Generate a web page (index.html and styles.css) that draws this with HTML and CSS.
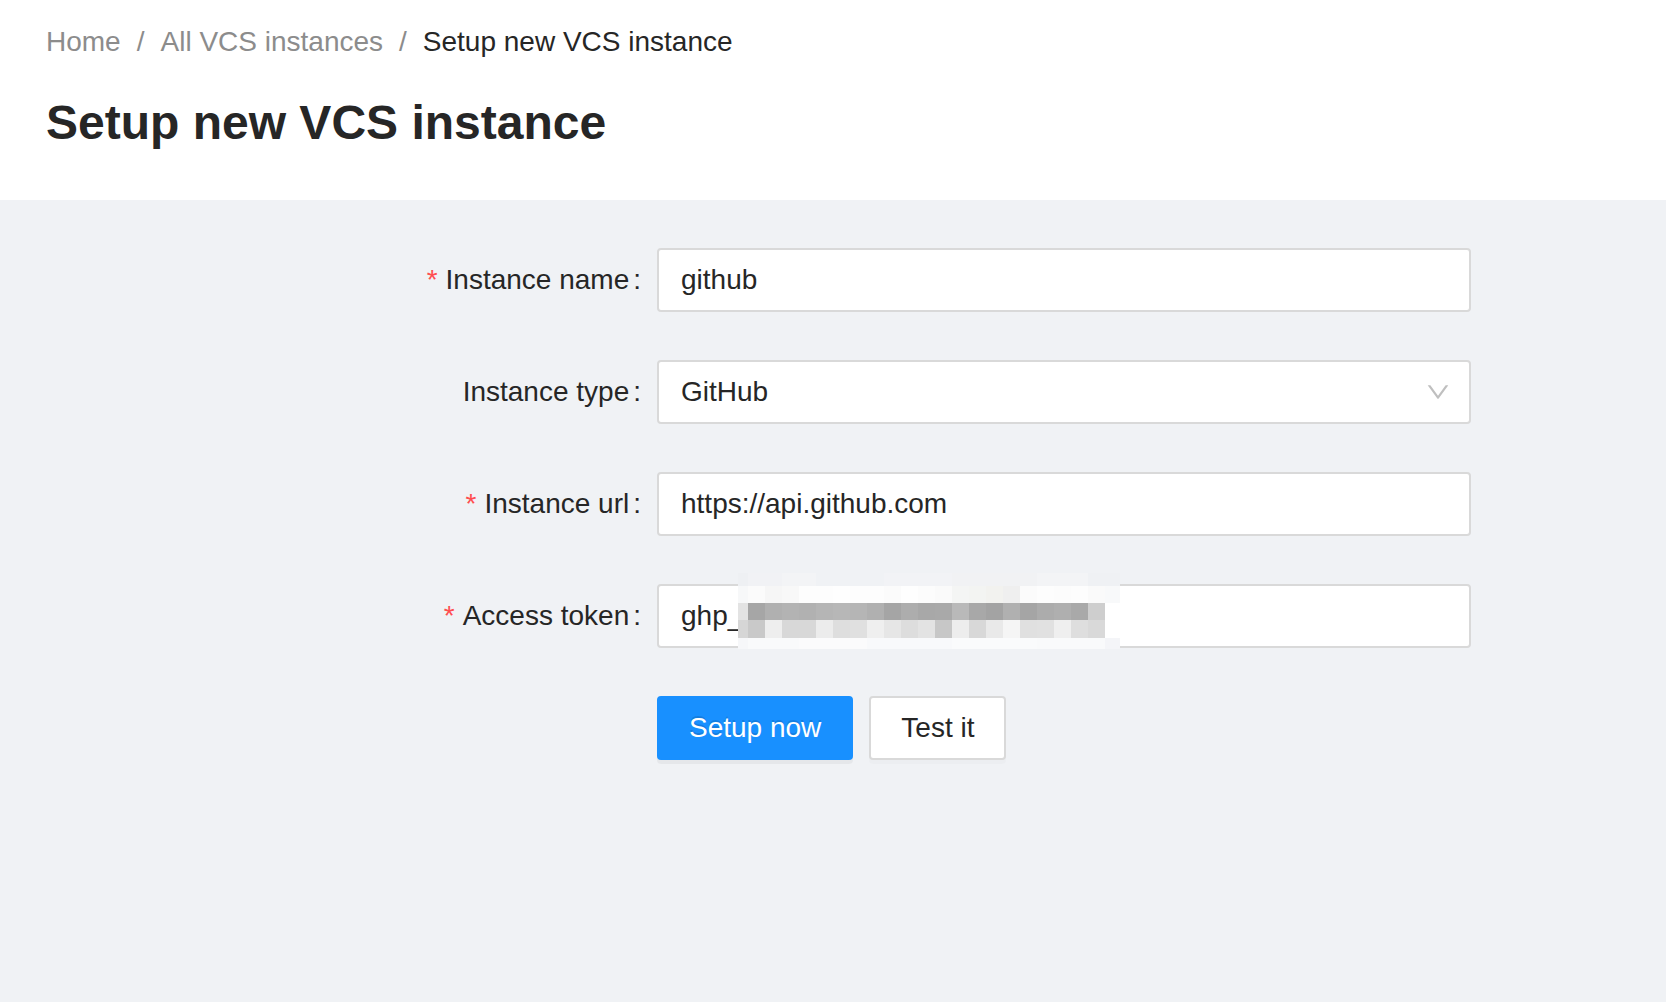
FILE: index.html
```html
<!DOCTYPE html>
<html lang="en">
<head>
<meta charset="utf-8">
<title>Setup new VCS instance</title>
<link rel="stylesheet" href="styles.css">
</head>
<body>
<div class="page">
  <header class="page-header">
    <nav class="breadcrumb"><a class="crumb link" href="#">Home</a><span class="sep">/</span><a class="crumb link" href="#">All VCS instances</a><span class="sep">/</span><span class="crumb current">Setup new VCS instance</span></nav>
    <h1 class="title">Setup new VCS instance</h1>
  </header>
  <main class="content">
    <form class="form">
      <label class="label required" for="name">Instance name</label>
      <div class="control"><input class="input" id="name" type="text" value="github"></div>

      <label class="label">Instance type</label>
      <div class="control">
        <div class="select">
          <span class="select-value">GitHub</span>
          <svg class="chevron" viewBox="64 64 896 896" width="24" height="24" aria-hidden="true"><path d="M884 256h-75c-5.1 0-9.9 2.5-12.9 6.6L512 654.2 227.9 262.6c-3-4.1-7.8-6.6-12.9-6.6h-75c-6.5 0-10.3 7.4-6.5 12.7l352.6 486.1c12.8 17.6 39 17.6 51.7 0l352.6-486.1c3.9-5.3.1-12.7-6.4-12.7z"/></svg>
        </div>
      </div>

      <label class="label required" for="url">Instance url</label>
      <div class="control"><input class="input" id="url" type="text" value="https://api.github.com"></div>

      <label class="label required" for="token">Access token</label>
      <div class="control token">
        <input class="input" id="token" type="text" value="ghp_">
        <div class="mosaic" aria-hidden="true">
          <div class="m-row m-r0"></div>
          <div class="m-row m-r1"></div>
          <div class="m-row m-r2"></div>
          <div class="m-row m-r3"></div>
          <div class="m-row m-r4"></div>
        </div>
      </div>

      <div class="control actions">
        <button class="btn btn-primary" type="button">Setup now</button>
        <button class="btn btn-default" type="button">Test it</button>
      </div>
    </form>
  </main>
</div>
</body>
</html>
```

FILE: styles.css
```css
* {
  box-sizing: border-box;
}

html, body {
  margin: 0;
  padding: 0;
}

body {
  font-family: "Liberation Sans", Arial, Helvetica, sans-serif;
  font-size: 28px;
  color: #262626;
  background: #f0f2f5;
}

.page {
  min-height: 100vh;
  display: flex;
  flex-direction: column;
}

.page-header {
  background: #ffffff;
  padding: 20px 46px 45px;
}

.breadcrumb {
  display: flex;
  line-height: 44px;
  font-size: 28px;
  color: #8c8c8c;
}

.crumb.link {
  color: #8c8c8c;
  text-decoration: none;
}

.crumb.current {
  color: #262626;
}

.sep {
  margin: 0 16px;
  color: #8c8c8c;
}

.title {
  margin: 27px 0 0;
  font-size: 48px;
  line-height: 64px;
  font-weight: 700;
  color: #262626;
}

.content {
  flex: 1;
  background: #f0f2f5;
}

.form {
  display: grid;
  grid-template-columns: 657px 814px;
  row-gap: 48px;
  padding-top: 48px;
}

.label {
  display: flex;
  justify-content: flex-end;
  align-items: center;
  height: 64px;
  line-height: 64px;
  color: #262626;
  white-space: nowrap;
}

.label.required::before {
  content: "*";
  color: #ff4d4f;
  margin-right: 8px;
}

.label::after {
  content: ":";
  margin: 0 16px 0 4px;
}

.control {
  position: relative;
  height: 64px;
}

.input {
  display: block;
  width: 100%;
  height: 64px;
  margin: 0;
  padding: 0 22px;
  border: 2px solid #d9d9d9;
  border-radius: 4px;
  background: #ffffff;
  font-family: "Liberation Sans", Arial, Helvetica, sans-serif;
  font-size: 28px;
  color: #262626;
  outline: none;
}

.select {
  display: flex;
  align-items: center;
  justify-content: space-between;
  height: 64px;
  padding: 0 19px 0 22px;
  border: 2px solid #d9d9d9;
  border-radius: 4px;
  background: #ffffff;
  color: #262626;
}

.chevron {
  display: block;
  fill: #bfbfbf;
}

.actions {
  grid-column: 2;
  display: flex;
  gap: 16px;
}

.btn {
  height: 64px;
  padding: 0 30px;
  border-radius: 4px;
  border: 2px solid #d9d9d9;
  font-family: "Liberation Sans", Arial, Helvetica, sans-serif;
  font-size: 28px;
  cursor: pointer;
}

.btn-primary {
  background: #1890ff;
  border-color: #1890ff;
  color: #ffffff;
  text-shadow: 0 -2px 0 rgba(0, 0, 0, 0.12);
  box-shadow: 0 4px 0 rgba(0, 0, 0, 0.045);
}

.btn-default {
  background: #ffffff;
  color: #262626;
  padding: 0 30px;
  box-shadow: 0 4px 0 rgba(0, 0, 0, 0.015);
}

/* pixelated redaction over the token value */
.mosaic {
  position: absolute;
  left: 81px;
  top: -11px;
  width: 382px;
  display: flex;
  flex-direction: column;
  pointer-events: none;
}

.m-row {
  width: 382px;
}

.m-r0 {
  height: 13px;
  background: linear-gradient(to right, #eef0f3 0 10px, #f1f2f5 10px 44px, #f3f4f6 44px 78px, #f0f2f5 78px 146px, #f2f3f6 146px 214px, #f1f2f4 214px 299px, #f3f4f6 299px 350px, #eff1f4 350px 382px);
}

.m-r1 {
  height: 17px;
  background: linear-gradient(to right, #f7f8f9 0 10px, #fbfbfb 10px 27px, #f6f6f6 27px 44px, #f8f8f8 44px 61px, #fdfdfd 61px 78px, #fdfdfd 78px 95px, #fefefe 95px 112px, #fdfdfd 112px 129px, #fdfdfd 129px 146px, #fbfbfb 146px 163px, #fefefe 163px 180px, #fcfcfc 180px 197px, #fafafa 197px 214px, #f4f5f4 214px 231px, #f3f4f2 231px 248px, #f2f2ef 248px 265px, #efefef 265px 282px, #fbfbfb 282px 299px, #fdfdfd 299px 316px, #fcfcfc 316px 333px, #fdfdfd 333px 350px, #fafafa 350px 367px, #f8f9fa 367px 382px);
}

.m-r2 {
  height: 17px;
  background: linear-gradient(to right, #e3e3e3 0 10px, #a6a6a6 10px 27px, #b0b0b0 27px 44px, #b3b3b3 44px 61px, #b1b1b1 61px 78px, #b5b5b5 78px 95px, #b7b7b7 95px 112px, #b5b5b5 112px 129px, #b0b0b0 129px 146px, #a5a5a5 146px 163px, #adadad 163px 180px, #a8a8a8 180px 197px, #a9a9a9 197px 214px, #b9b9b9 214px 231px, #a8a8a8 231px 248px, #a3a3a3 248px 265px, #b0b0b0 265px 282px, #a5a5a5 282px 299px, #acacac 299px 316px, #afafaf 316px 333px, #a9a9a9 333px 350px, #cecece 350px 367px, #ffffff 367px 382px);
}

.m-r3 {
  height: 18px;
  background: linear-gradient(to right, #d6d6d6 0 10px, #c9c9c9 10px 27px, #eeeeee 27px 44px, #d8d8d8 44px 61px, #d8d8d8 61px 78px, #ececec 78px 95px, #dedede 95px 112px, #e0e0e0 112px 129px, #efefef 129px 146px, #e6e6e6 146px 163px, #dddddd 163px 180px, #e3e3e3 180px 197px, #c7c7c7 197px 214px, #ededed 214px 231px, #d8d8d8 231px 248px, #e9e9e9 248px 265px, #f5f5f5 265px 282px, #e0e0e0 282px 299px, #e1e1e1 299px 316px, #efefef 316px 333px, #dedede 333px 350px, #d9d9d9 350px 367px, #ffffff 367px 382px);
}

.m-r4 {
  height: 11px;
  background: linear-gradient(to right, #f6f7f9 0 10px, #f9fafb 10px 61px, #fbfbfc 61px 129px, #f8f9fb 129px 214px, #fafbfc 214px 299px, #f9fafb 299px 367px, #f4f5f8 367px 382px);
}
```
